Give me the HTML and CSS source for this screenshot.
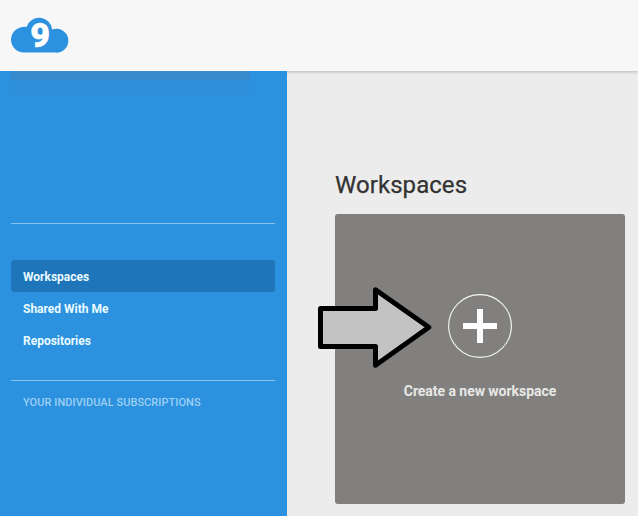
FILE: index.html
```html
<!DOCTYPE html>
<html lang="en">
<head>
<meta charset="utf-8">
<title>Workspaces</title>
<link rel="stylesheet" href="styles.css">
</head>
<body>
<header class="topbar">
  <svg class="logo" width="58" height="44" viewBox="0.8 0 58 44" role="img" aria-label="Cloud 9">
    <path class="cloud" d="M14 36.6A13.2 12.9 0 1 1 16.3 11A13.2 13.2 0 0 1 42 13.4A12 12 0 1 1 45 36.6Z"/>
    <text class="nine" transform="translate(29.8 30.8)" text-anchor="middle">9</text>
  </svg>
</header>
<div class="layout">
  <aside class="sidebar">
    <div class="profile"></div>
    <nav class="menu">
      <a class="item active">Workspaces</a>
      <a class="item">Shared With Me</a>
      <a class="item">Repositories</a>
    </nav>
    <h2 class="subscriptions">YOUR INDIVIDUAL SUBSCRIPTIONS</h2>
  </aside>
  <main class="content">
    <h1 class="title">Workspaces</h1>
    <div class="card">
      <svg class="plus" width="64" height="64" viewBox="0 0 64 64">
        <circle cx="32" cy="32" r="31.4"/>
        <path d="M29 15h6v14h14v6H35v14h-6V35H15v-6h14z"/>
      </svg>
      <span class="label">Create a new workspace</span>
      <svg class="arrow" width="116" height="84" viewBox="0 0 116 84">
        <path d="M4.5 23.5H59.5V4.7L112.8 42.3L59.5 80.2V61.5H4.5Z"/>
      </svg>
    </div>
  </main>
</div>
</body>
</html>
```
FILE: styles.css
```css
* { box-sizing: border-box; }
body {
  margin: 0;
  height: 516px;
  overflow: hidden;
  background: #ececec;
  font-family: Roboto, "Liberation Sans", sans-serif;
}
.topbar {
  position: relative;
  height: 71px;
  padding: 16px 11px 0;
  background: #f7f7f7;
  box-shadow: 0 1px 3px rgba(0, 0, 0, .22);
}
.logo { display: block; overflow: visible; }
.cloud { fill: #2c91df; }
.nine {
  fill: #fff;
  stroke: #fff;
  stroke-width: .5px;
  font: 900 34px Roboto, sans-serif;
}
.layout { display: flex; height: 445px; }
.sidebar {
  position: relative;
  width: 287px;
  padding: 0 12px 0 11px;
  background: #2c91df;
}
.profile {
  height: 153px;
  border-bottom: 1px solid #8bc4ef;
  background: linear-gradient(#368bce 0 9px, #2e8fdb 9px 25px, transparent 25px) no-repeat 0 0 / 239px 25px;
}
.menu {
  height: 157px;
  padding-top: 36px;
  border-bottom: 1px solid #8bc4ef;
}
.item {
  display: block;
  height: 32px;
  padding: 1px 0 0 12px;
  border-radius: 3px;
  color: #e9fbff;
  font-size: 12px;
  font-weight: 700;
  line-height: 32px;
}
.active { background: #1e75b9; }
.subscriptions {
  margin: 15px 0 0 12px;
  color: #9dd0f3;
  font-size: 11px;
  font-weight: 500;
  letter-spacing: .05px;
  line-height: 14px;
  white-space: nowrap;
}
.content { flex: 1; padding: 98px 0 0 48px; }
.title {
  margin: 0;
  height: 45px;
  color: #333;
  font-size: 24px;
  font-weight: 400;
  letter-spacing: .06px;
  line-height: 32px;
  -webkit-text-stroke: .25px #333;
}
.card {
  position: relative;
  display: flex;
  flex-direction: column;
  align-items: center;
  width: 290px;
  height: 290px;
  padding-top: 80px;
  border-radius: 3px;
  background: #81807e;
}
.plus { display: block; fill: #fff; }
.plus circle { fill: none; stroke: #f4f4f4; stroke-width: 1.1; }
.label {
  margin-top: 24px;
  color: #e8e8e6;
  font-size: 14px;
  font-weight: 700;
  letter-spacing: -.04px;
  line-height: 18px;
}
.arrow { position: absolute; left: -19px; top: 71px; }
.arrow path {
  fill: #c3c3c3;
  stroke: #000;
  stroke-width: 5;
  stroke-linejoin: round;
}
```
